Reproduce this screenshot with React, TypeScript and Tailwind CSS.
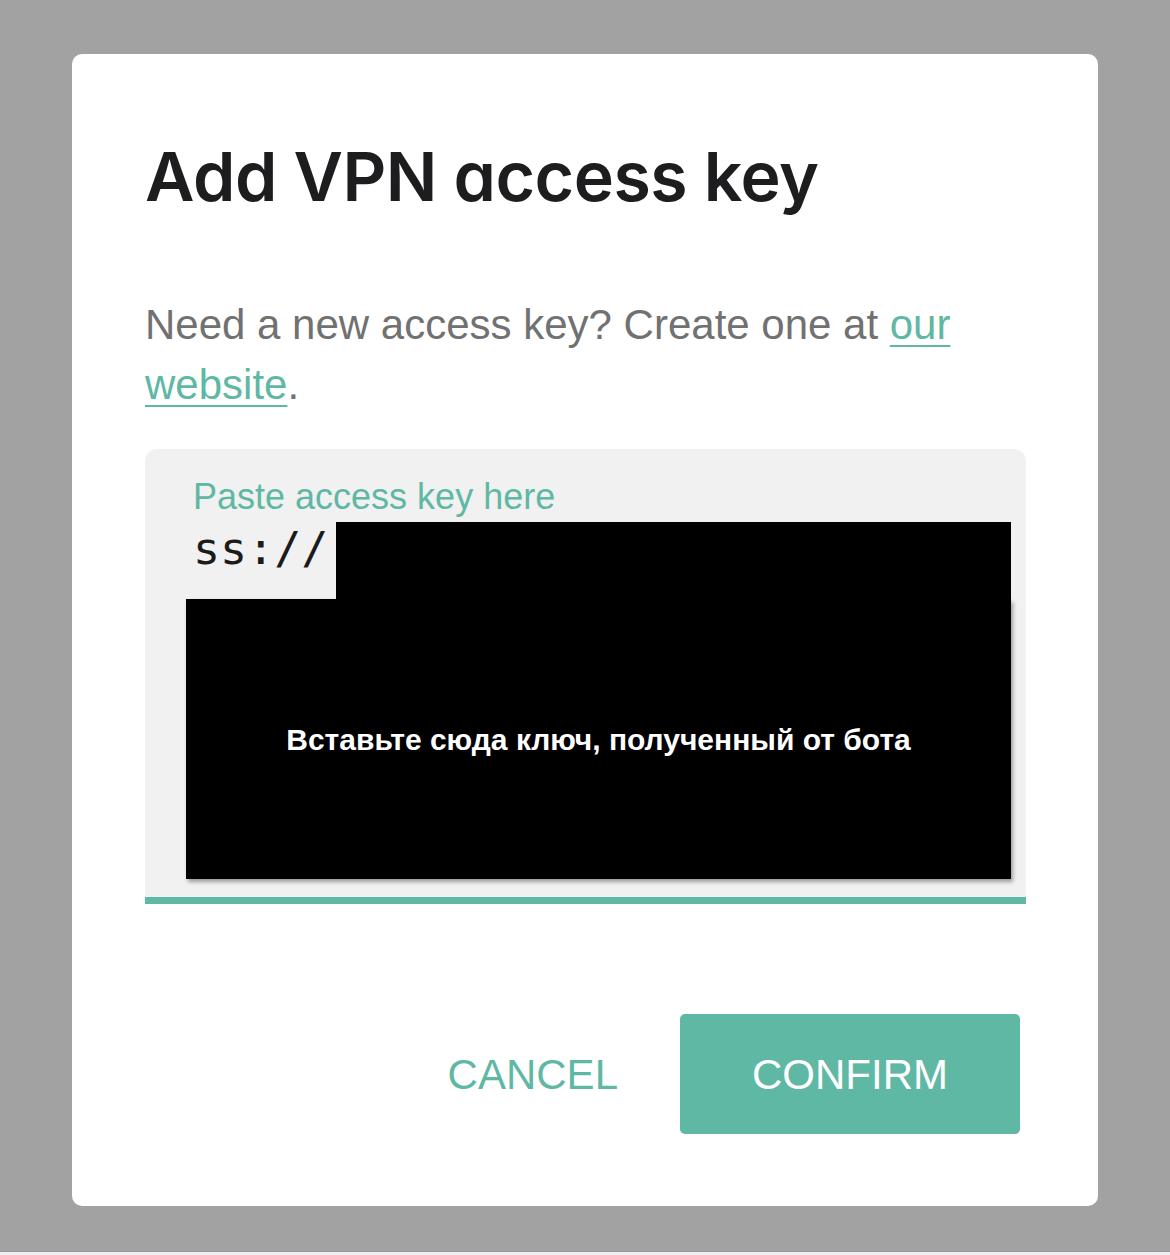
export default function App() {
  return (
    <div className="min-h-[1255px] w-full bg-[#a2a2a2] flex flex-col">
      <div className="flex-1 pt-[54px] pb-[45px] px-[72px]">
        <div className="bg-white rounded-[10px] h-[1152px] flex flex-col pl-[73px] pr-[72px] pt-[82px]">
          <h1
            className="text-[68px] leading-[80px] font-semibold text-[#1d1d20] tracking-[-0.5px] [font-family:Inter,sans-serif] [font-feature-settings:'cv11']"
          >
            Add VPN access key
          </h1>

          <p className="mt-[79px] text-[42px] leading-[60px] text-[#717171] [font-family:'Liberation_Sans',Arial,sans-serif]">
            Need a new access key? Create one at{' '}
            <a className="text-[#5fb8a4] underline decoration-2 underline-offset-[6px]">our website</a>.
          </p>

          {/* Text field */}
          <div className="mt-[34px] relative bg-[#f1f1f1] rounded-t-[12px] h-[455px] border-b-[7px] border-[#5fb8a4] pl-[48px] pt-[28px]">
            <div className="text-[36px] leading-[40px] text-[#5fb8a4] [font-family:'Liberation_Sans',Arial,sans-serif]">
              Paste access key here
            </div>
            <div className="mt-[2px] text-[45px] leading-[60px] text-[#1b1b1b] [font-family:'DejaVu_Sans_Mono',monospace]">
              ss://
            </div>

            {/* redaction */}
            <div className="absolute left-[191px] top-[73px] w-[675px] h-[78px] bg-black" />
            <div className="absolute left-[41px] top-[150px] w-[825px] h-[280px] bg-black shadow-[2px_3px_4px_rgba(0,0,0,0.35)] flex items-center justify-center">
              <span className="text-white font-bold text-[30px] [font-family:'Liberation_Sans',Arial,sans-serif]">
                Вставьте сюда ключ, полученный от бота
              </span>
            </div>
          </div>

          <div className="mt-[110px] flex items-center justify-end gap-[62px] pr-[6px] [font-family:'Liberation_Sans',Arial,sans-serif]">
            <button className="text-[42px] text-[#5fb8a4]">CANCEL</button>
            <button className="w-[340px] h-[120px] rounded-[5px] bg-[#5fb8a4] text-white text-[42px]">
              CONFIRM
            </button>
          </div>
        </div>
      </div>
      <div className="h-[4px] bg-[#efeff1] border-t border-[#979797]" />
    </div>
  );
}
